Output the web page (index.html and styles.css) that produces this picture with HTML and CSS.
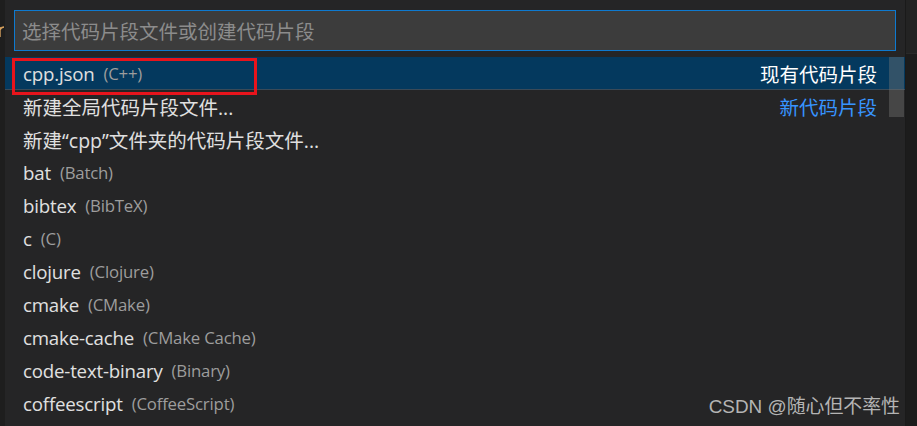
FILE: index.html
```html
<!DOCTYPE html>
<html lang="zh-CN">
<head>
    <meta charset="UTF-8">
    <title>选择代码片段</title>
    <link rel="stylesheet" href="styles.css">
</head>
<body>
    <div class="page">
        <div class="gutter">
            <svg class="frag" width="5" height="14" viewBox="0 0 5 14"><path d="M0 3 L0 13 M0 6 Q1 3 4 3" stroke="#d9a25e" stroke-width="1.4" fill="none"/></svg>
        </div>
        <div class="picker">
            <div class="inputbox">
                <span class="placeholder">选择代码片段文件或创建代码片段</span>
            </div>
            <div class="list">
                <div class="row active">
                    <span class="label">cpp.json</span><span class="desc">(C++)</span>
                    <span class="group">现有代码片段</span>
                    <div class="redbox"></div>
                </div>
                <div class="row">
                    <span class="label cjk">新建全局代码片段文件...</span>
                    <span class="group blue">新代码片段</span>
                </div>
                <div class="row"><span class="label cjk">新建“cpp”文件夹的代码片段文件...</span></div>
                <div class="row"><span class="label">bat</span><span class="desc">(Batch)</span></div>
                <div class="row"><span class="label">bibtex</span><span class="desc">(BibTeX)</span></div>
                <div class="row"><span class="label">c</span><span class="desc">(C)</span></div>
                <div class="row"><span class="label">clojure</span><span class="desc">(Clojure)</span></div>
                <div class="row"><span class="label">cmake</span><span class="desc">(CMake)</span></div>
                <div class="row"><span class="label">cmake-cache</span><span class="desc">(CMake Cache)</span></div>
                <div class="row"><span class="label">code-text-binary</span><span class="desc">(Binary)</span></div>
                <div class="row"><span class="label">coffeescript</span><span class="desc">(CoffeeScript)</span></div>
                <div class="scrollbar"></div>
            </div>
            <div class="watermark">CSDN @随心但不率性</div>
        </div>
        <div class="rightside"><div class="rtop"></div></div>
    </div>
</body>
</html>
```
FILE: styles.css
```css
html, body {
    margin: 0;
    padding: 0;
}
body {
    background-color: #1e1e1e;
    font-family: "Open Sans", "Noto Sans CJK SC", sans-serif;
    width: 917px;
    height: 426px;
    overflow: hidden;
}
.page {
    display: flex;
    height: 426px;
}
.gutter {
    width: 5px;
    background-color: #1e1e1e;
    overflow: hidden;
    padding-top: 24px;
    box-sizing: border-box;
}
.frag {
    display: block;
}
.picker {
    position: relative;
    width: 900px;
    background-color: #252526;
    padding-top: 10px;
    box-sizing: border-box;
}
.inputbox {
    margin: 0 9px;
    height: 41px;
    background-color: #3c3c3c;
    border: 1px solid #0e7ad0;
    box-sizing: border-box;
    display: flex;
    align-items: center;
    padding-left: 7px;
}
.placeholder {
    color: #8c8c8c;
    font-size: 19.5px;
    font-family: "Noto Sans CJK SC", sans-serif;
}
.list {
    position: relative;
    margin-top: 6px;
}
.row {
    position: relative;
    height: 33px;
    display: flex;
    align-items: center;
    padding-left: 18px;
    padding-right: 28px;
    color: #e0e0e0;
    font-size: 18.7px;
}
.row.active {
    background-color: #04395e;
    border-bottom: 1px solid #3a4a58;
    box-sizing: border-box;
}
.label {
    white-space: nowrap;
    letter-spacing: -0.2px;
}
.label.cjk {
    font-size: 19.5px;
    letter-spacing: 0;
}
.desc {
    margin-left: 9px;
    color: #9d9d9d;
    font-size: 16.8px;
    letter-spacing: -0.2px;
}
.group {
    margin-left: auto;
    color: #ffffff;
    font-size: 19.5px;
    font-family: "Noto Sans CJK SC", sans-serif;
}
.group.blue {
    color: #3794ff;
}
.redbox {
    position: absolute;
    left: 7px;
    top: 1px;
    width: 245px;
    height: 37px;
    border: 3px solid #e8141c;
    box-sizing: border-box;
}
.scrollbar {
    position: absolute;
    right: 1px;
    top: 0;
    width: 15px;
    height: 60px;
    background-color: rgba(121, 121, 121, 0.4);
}
.watermark {
    position: absolute;
    right: 5px;
    bottom: 8px;
    color: #b4b4b4;
    font-size: 18.9px;
    font-family: "Liberation Sans", "Noto Sans CJK SC", sans-serif;
}
.rightside {
    flex: 1;
    background-color: #1c1c1c;
    border-left: 1px solid #1a1a1a;
}
.rtop {
    height: 53px;
    background-color: #232323;
    border-bottom: 1px solid #2a2a2a;
}
```
